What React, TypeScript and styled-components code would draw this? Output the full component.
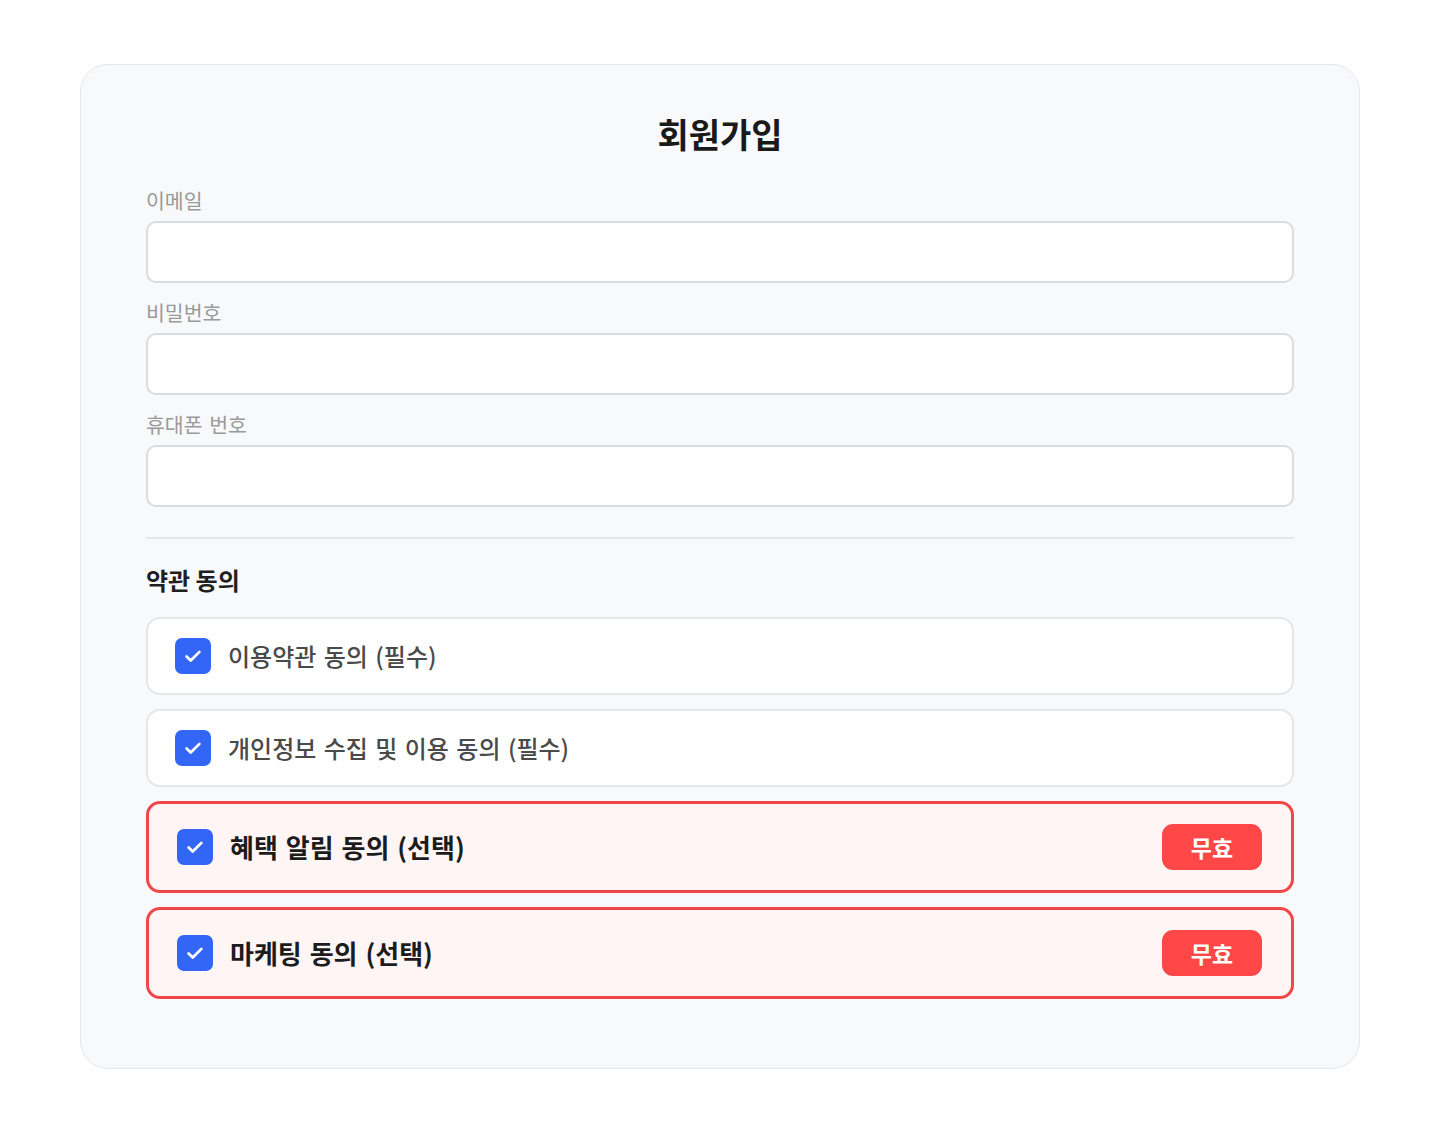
import React from "react";
import styled, { createGlobalStyle } from "styled-components";

const GlobalStyle = createGlobalStyle`
  * { box-sizing: border-box; }
  html, body { margin: 0; padding: 0; background: #ffffff; }
  body {
    font-family: "Noto Sans CJK KR", "Noto Sans", sans-serif;
    -webkit-font-smoothing: antialiased;
  }
`;

const Page = styled.div`
  padding: 64px 80px 66px;
`;

const Card = styled.div`
  width: 1280px;
  background: #f8f9fb;
  border: 1px solid #e4e6ea;
  border-radius: 28px;
  padding: 48px 65px 69px;
  display: flex;
  flex-direction: column;
`;

const Title = styled.h1`
  margin: 0 0 30px;
  text-align: center;
  font-size: 34px;
  line-height: 42px;
  font-weight: 700;
  color: #1a1a1a;
`;

const Field = styled.div`
  display: flex;
  flex-direction: column;
  margin-bottom: 14px;
`;

const Label = styled.label`
  font-size: 20.5px;
  line-height: 30px;
  color: #9a9a9a;
  margin-bottom: 6px;
  word-spacing: 2px;
`;

const Input = styled.input`
  height: 62px;
  border: 2px solid #dcdcdc;
  border-radius: 10px;
  background: #ffffff;
  padding: 0 18px;
  font-size: 20px;
  font-family: inherit;
  outline: none;
`;

const Divider = styled.hr`
  margin: 16px 0 0;
  border: none;
  border-top: 2px solid #e6e7ea;
`;

const SectionTitle = styled.h2`
  margin: 25px 0 20.5px;
  font-size: 24px;
  line-height: 32px;
  font-weight: 700;
  color: #1f1f1f;
`;

const AgreeList = styled.div`
  display: flex;
  flex-direction: column;
  gap: 14px;
`;

const AgreeRow = styled.div<{ $invalid?: boolean }>`
  display: flex;
  align-items: center;
  gap: 17px;
  border-radius: 14px;
  height: ${(p) => (p.$invalid ? "92px" : "78px")};
  border: ${(p) => (p.$invalid ? "3px solid #f04848" : "2px solid #e4e6ea")};
  background: ${(p) => (p.$invalid ? "#fff5f5" : "#ffffff")};
  padding: ${(p) => (p.$invalid ? "0 29px 0 28px" : "0 27px")};
`;

const Check = styled.span`
  flex: none;
  width: 36px;
  height: 36px;
  border-radius: 7px;
  background: #3366f6;
  display: flex;
  align-items: center;
  justify-content: center;
`;

const AgreeText = styled.span<{ $strong?: boolean }>`
  flex: 1;
  font-size: ${(p) => (p.$strong ? "26px" : "24px")};
  line-height: 38px;
  word-spacing: 2px;
  font-weight: ${(p) => (p.$strong ? 700 : 500)};
  color: ${(p) => (p.$strong ? "#1c1c1c" : "#4a4a4a")};
`;

const Badge = styled.span`
  flex: none;
  width: 100px;
  height: 46px;
  border-radius: 11px;
  background: #ff4747;
  color: #ffffff;
  font-size: 23px;
  font-weight: 700;
  display: flex;
  align-items: center;
  justify-content: center;
`;

const CheckIcon = () => (
  <svg width="22" height="22" viewBox="0 0 24 24" fill="none">
    <path
      d="M5 12.5l4.5 4.5L19 7.5"
      stroke="#ffffff"
      strokeWidth="3"
      strokeLinecap="round"
      strokeLinejoin="round"
    />
  </svg>
);

const fields = ["이메일", "비밀번호", "휴대폰 번호"];

const agreements = [
  { text: "이용약관 동의 (필수)", invalid: false },
  { text: "개인정보 수집 및 이용 동의 (필수)", invalid: false },
  { text: "혜택 알림 동의 (선택)", invalid: true },
  { text: "마케팅 동의 (선택)", invalid: true },
];

export default function App() {
  return (
    <>
      <GlobalStyle />
      <Page>
        <Card>
          <Title>회원가입</Title>
          {fields.map((f) => (
            <Field key={f}>
              <Label>{f}</Label>
              <Input type={f === "비밀번호" ? "password" : "text"} />
            </Field>
          ))}
          <Divider />
          <SectionTitle>약관 동의</SectionTitle>
          <AgreeList>
            {agreements.map((a) => (
              <AgreeRow key={a.text} $invalid={a.invalid}>
                <Check>
                  <CheckIcon />
                </Check>
                <AgreeText $strong={a.invalid}>{a.text}</AgreeText>
                {a.invalid && <Badge>무효</Badge>}
              </AgreeRow>
            ))}
          </AgreeList>
        </Card>
      </Page>
    </>
  );
}
